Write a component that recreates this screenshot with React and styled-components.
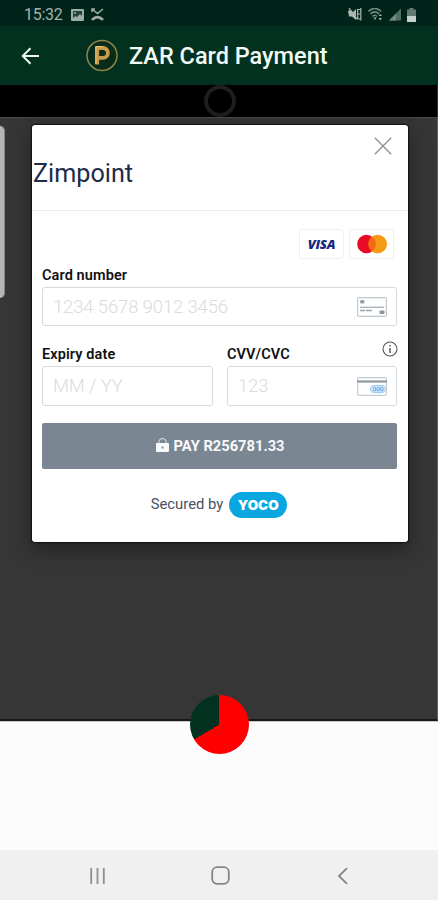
import React from "react";
import styled, { createGlobalStyle } from "styled-components";

const GlobalStyle = createGlobalStyle`
    *{
        box-sizing: border-box;
    }
    body{
        margin: 0;
        font-family: Roboto, "Liberation Sans", sans-serif;
        background-color: #fcfcfc;
    }
    svg{
        display: block;
        flex: none;
    }
`
const Screen = styled.div`
    width: 438px;
    height: 900px;
    display: flex;
    flex-direction: column;
    overflow: hidden;
`
const StatusBar = styled.div`
    display: flex;
    flex: none;
    align-items: center;
    justify-content: space-between;
    height: 26px;
    padding: 3px 22px 0 24px;
    background-color: #01241a;
    color: #a3b3aa;
    font-size: 16px;
    line-height: 24px;
`
const StatusGroup = styled.div`
    display: flex;
    align-items: center;
    gap: ${props => props.$gap}px;
`
const Time = styled.span`
    width: 40px;
    letter-spacing: -0.3px;
`
const AppBar = styled.header`
    display: flex;
    flex: none;
    align-items: center;
    height: 59px;
    padding-left: 21px;
    background-color: #023120;
`
const Logo = styled.div`
    display: flex;
    margin: 0 11px 0 47px;
`
const Title = styled.h1`
    margin: 0;
    color: #f1faf4;
    font-size: 23.5px;
    font-weight: 500;
    line-height: 30px;
    white-space: nowrap;
`
const LoadingStrip = styled.div`
    display: flex;
    flex: none;
    justify-content: center;
    height: 32px;
    padding-left: 2px;
    background-color: #000;
    border-right: 1px solid #323232;
`
const Overlay = styled.main`
    position: relative;
    flex: none;
    height: 604px;
    padding: 7px 29px 0 32px;
    background-color: #363636;
    border-top: 1px solid #4a4a4a;
    border-right: 1px solid #626262;
    border-bottom: 2px solid #181818;
`
const SideHandle = styled.div`
    position: absolute;
    left: 0;
    top: 8px;
    width: 5px;
    height: 172px;
    background-color: #b5b5b5;
    border-right: 1px solid #858585;
    border-radius: 0 5px 5px 0;
`
const Modal = styled.section`
    width: 376px;
    height: 417px;
    background-color: #fff;
    border-radius: 3px;
    box-shadow: 0 0 1px 1px #111, 0 6px 22px rgba(0, 0, 0, 0.42);
`
const ModalHeader = styled.div`
    display: flex;
    justify-content: space-between;
    height: 86px;
    padding: 12px 16px 0 1px;
    border-bottom: 1px solid #ebebed;
`
const StoreName = styled.h2`
    margin: 19px 0 0;
    color: #202b48;
    font-size: 25.2px;
    font-weight: 400;
    line-height: 35px;
`
const Form = styled.div`
    display: flex;
    flex-direction: column;
    padding: 18px 11px 0 10px;
`
const Brands = styled.div`
    display: flex;
    justify-content: flex-end;
    gap: 5px;
    padding-right: 3px;
`
const Brand = styled.div`
    display: flex;
    align-items: center;
    justify-content: center;
    width: 45px;
    height: 30px;
    border: 1px solid #efeff3;
    border-radius: 3px;
`
const Visa = styled.span`
    color: #17267f;
    font-family: "Open Sans", sans-serif;
    font-size: 13px;
    font-style: italic;
    font-weight: 800;
    line-height: 16px;
    letter-spacing: -0.3px;
`
const Row = styled.div`
    display: grid;
    grid-template-columns: 171px 170px;
    column-gap: 14px;
    margin-top: 17px;
`
const Group = styled.div`
    display: flex;
    flex-direction: column;
`
const Label = styled.div`
    display: flex;
    justify-content: space-between;
    height: 20px;
    margin-top: ${props => props.$top || 0}px;
    color: #111;
    font-size: 14.5px;
    font-weight: 600;
    line-height: 23px;
    letter-spacing: 0.1px;
`
const InfoIcon = styled.svg`
    margin-top: -2px;
    margin-right: -1px;
`
const Field = styled.div`
    display: flex;
    align-items: center;
    justify-content: space-between;
    height: ${props => props.$height}px;
    margin-top: 3px;
    padding: 0 9px 0 10px;
    border: 1px solid #d7dadd;
    border-radius: 3px;
    color: #dadbdc;
    font-size: 18.5px;
    font-weight: 300;
    letter-spacing: -0.15px;
`
const PayButton = styled.button`
    display: flex;
    align-items: center;
    justify-content: center;
    gap: 4px;
    height: 46px;
    margin-top: 17px;
    padding: 0 0 0 2px;
    border: 0;
    border-radius: 2px;
    background-color: #7a8793;
    color: #f7f9fb;
    font-family: inherit;
    font-size: 14.7px;
    font-weight: 700;
`
const Secured = styled.div`
    display: flex;
    align-items: center;
    justify-content: center;
    gap: 6px;
    margin-top: 22px;
    padding-right: 1px;
    color: #4a5065;
    font-size: 14.8px;
    line-height: 27px;
`
const Yoco = styled.span`
    width: 58px;
    height: 26px;
    border-radius: 13px;
    background-color: #09a6df;
    color: #fff;
    font-family: Inter, sans-serif;
    font-size: 13.5px;
    font-weight: 900;
    line-height: 26px;
    text-align: center;
`
const PageBottom = styled.div`
    display: flex;
    flex: none;
    justify-content: center;
    height: 129px;
    background-color: #fcfcfc;
    border-top: 1px solid #c8c8c8;
`
const Spinner = styled.div`
    position: relative;
    top: -27px;
    width: 59px;
    height: 59px;
    border-radius: 50%;
    background: conic-gradient(#fe0000 0 66.4%, #023120 66.6% 100%);
`
const NavBar = styled.nav`
    display: flex;
    flex: none;
    align-items: center;
    justify-content: space-between;
    height: 50px;
    padding: 1px 89px 0 88px;
    background-color: #f0f0f0;
`
const HomeIcon = styled.svg`
    margin-right: 3px;
`

class StatusIcons extends React.Component{
    render(){
        return (
            <StatusGroup $gap={6}>
                <svg width="14" height="13" viewBox="0 0 14 13">
                    <path d="M0 3l2-1 3 2 3-3v11L4 8.500H1z" fill="#a9b9b0"/>
                    <path d="M1 0l8 11M9.700 1v10.500M12.800 0v12.500M9 1.500h4M9 6h3M9 11h4" stroke="#a9b9b0" strokeWidth="1.200" fill="none"/>
                </svg>
                <svg width="15" height="13" viewBox="0 0 15 13">
                    <path d="M.5 3.500C4-.5 9.500-.5 13 3.500M2.500 6C5 3.200 8.500 3.200 11 6M4.500 8.500c1.500-1.700 3-1.700 4.500 0" fill="none" stroke="#718b7f" strokeWidth="1.600"/>
                    <path d="M5.500 9.500h3L7 12zM10.500 8l1.700-2L14 8zM10.500 10l1.700 2.500L14 10z" fill="#a3b3aa"/>
                </svg>
                <svg width="12" height="13" viewBox="0 0 12 13">
                    <path d="M0 12.500L12 .5v12z" fill="#526f61"/>
                    <path d="M0 12.500l7-7v7z" fill="#718b7f"/>
                </svg>
                <svg width="9" height="14" viewBox="0 0 9 14">
                    <path d="M2.500 0h4v1.500H9V14H0V1.500h2.500z" fill="#63796e"/>
                    <path d="M0 8h9v6H0z" fill="#c4d0c9"/>
                </svg>
            </StatusGroup>
        )
    }
}

class PaymentModal extends React.Component{
    render(){
        return (
            <Modal>
                <ModalHeader>
                    <StoreName>Zimpoint</StoreName>
                    <svg width="18" height="18" viewBox="0 0 18 18">
                        <path d="M.8.8l16.400 16.400M17.200.8L.8 17.200" stroke="#929292" strokeWidth="1.400"/>
                    </svg>
                </ModalHeader>
                <Form>
                    <Brands>
                        <Brand><Visa>VISA</Visa></Brand>
                        <Brand>
                            <svg width="30" height="20" viewBox="0 0 30 20">
                                <circle cx="9.500" cy="10" r="9.300" fill="#e90a25"/>
                                <circle cx="20.700" cy="10" r="9.300" fill="#f49a17"/>
                                <path d="M15.100 2.600a9.300 9.300 0 0 1 0 14.800a9.300 9.300 0 0 1 0-14.800" fill="#f46a12"/>
                            </svg>
                        </Brand>
                    </Brands>
                    <Group>
                        <Label $top={5}>Card number</Label>
                        <Field $height={39}>
                            <span>1234 5678 9012 3456</span>
                            <svg width="30" height="20" viewBox="0 0 30 20">
                                <rect x=".6" y=".6" width="28.800" height="18.800" rx="1.500" fill="#fdfefe" stroke="#c0c8cd" strokeWidth="1.200"/>
                                <path d="M3 10.300h24" stroke="#a7afb4" strokeWidth="1.300"/>
                                <rect x="3" y="3" width="4.500" height="3.500" rx="1.500" fill="#929da4"/>
                                <path d="M3 13.500h5M9 13.500h6" stroke="#9ba5ab" strokeWidth="1.300"/>
                                <rect x="22.500" y="13.500" width="5" height="3.500" rx="1" fill="#8d989f"/>
                            </svg>
                        </Field>
                    </Group>
                    <Row>
                        <Group>
                            <Label>Expiry date</Label>
                            <Field $height={40}><span>MM / YY</span></Field>
                        </Group>
                        <Group>
                            <Label>
                                <span>CVV/CVC</span>
                                <InfoIcon width="16" height="16" viewBox="0 0 16 16">
                                    <circle cx="8" cy="8" r="7" fill="none" stroke="#555" strokeWidth="1.100"/>
                                    <path d="M8 7v5M8 4v1.500" stroke="#444" strokeWidth="1.300"/>
                                </InfoIcon>
                            </Label>
                            <Field $height={40}>
                                <span>123</span>
                                <svg width="30" height="19" viewBox="0 0 30 19">
                                    <rect x=".6" y=".6" width="28.800" height="17.800" rx="1.500" fill="#fdfefe" stroke="#c6cdd2" strokeWidth="1.200"/>
                                    <path d="M0 4.500h30" stroke="#8d989f" strokeWidth="2.200"/>
                                    <rect x="13.500" y="8.500" width="15" height="7" rx="3.500" fill="#e2f0fd" stroke="#9dcaf2"/>
                                    <g fill="none" stroke="#69aceb" strokeWidth="1.100">
                                        <ellipse cx="17.500" cy="12" rx="1.300" ry="2"/>
                                        <ellipse cx="21.200" cy="12" rx="1.300" ry="2"/>
                                        <ellipse cx="24.900" cy="12" rx="1.300" ry="2"/>
                                    </g>
                                </svg>
                            </Field>
                        </Group>
                    </Row>
                    <PayButton>
                        <svg width="13" height="17" viewBox="0 0 13 17">
                            <path d="M3 6V4a3.500 3.500 0 0 1 7 0V6" fill="none" stroke="#c5ccd1" strokeWidth="1.300"/>
                            <path d="M1 5h11q1 0 1 1v7q0 1-1 1H1q-1 0-1-1V6q0-1 1-1z" fill="#f7f9fb"/>
                            <circle cx="6.500" cy="9.500" r="1.200" fill="#9ba5ae"/>
                        </svg>
                        <span>PAY R256781.33</span>
                    </PayButton>
                    <Secured>
                        <span>Secured by</span>
                        <Yoco>YOCO</Yoco>
                    </Secured>
                </Form>
            </Modal>
        )
    }
}

class App extends React.Component{
    render(){
        return (
            <Screen>
                <GlobalStyle/>
                <StatusBar>
                    <StatusGroup $gap={7}>
                        <Time>15:32</Time>
                        <svg width="13" height="12" viewBox="0 0 13 12">
                            <rect width="13" height="12" rx="1" fill="#9caea4"/>
                            <path d="M2 2h9v5L9 5 6 8 4.500 7 2 9z" fill="#214537"/>
                            <circle cx="4" cy="4" r="1" fill="#9caea4"/>
                        </svg>
                        <svg width="13" height="13" viewBox="0 0 13 13">
                            <path d="M1 4V1h3M1.500 1.500l5 4L12 1" fill="none" stroke="#9caea4" strokeWidth="1.600"/>
                            <path d="M0 11Q6.500 4.500 13 11l-2 1.700-2.500-1.700q-2-.8-4 0L2 12.700z" fill="#9caea4"/>
                        </svg>
                    </StatusGroup>
                    <StatusIcons/>
                </StatusBar>
                <AppBar>
                    <svg width="18" height="18" viewBox="0 0 18 18">
                        <path d="M9.500 1.200L1.700 9l7.800 7.800M1.700 9H18" fill="none" stroke="#eef7f1" strokeWidth="2"/>
                    </svg>
                    <Logo>
                        <svg width="32" height="33" viewBox="0 0 32 33">
                            <circle cx="16" cy="16.500" r="15" fill="#082b1a" stroke="#8e8549" strokeWidth="1.500"/>
                            <path d="M11.200 25.500V9h5.800a4.900 4.900 0 0 1 0 9.800h-6" fill="none" stroke="#c99b48" strokeWidth="3.800"/>
                            <path d="M9.800 25V7.600h7.500" fill="none" stroke="#e9ca80" strokeWidth="1"/>
                        </svg>
                    </Logo>
                    <Title>ZAR Card Payment</Title>
                </AppBar>
                <LoadingStrip>
                    <svg width="34" height="32" viewBox="0 0 34 32">
                        <circle cx="17" cy="16" r="14" fill="none" stroke="#1e1e1e" strokeWidth="4"/>
                    </svg>
                </LoadingStrip>
                <Overlay>
                    <SideHandle/>
                    <PaymentModal/>
                </Overlay>
                <PageBottom>
                    <Spinner/>
                </PageBottom>
                <NavBar>
                    <svg width="18" height="18" viewBox="0 0 18 18">
                        <path d="M3.200 1v16M9.500 1v16M15.800 1v16" stroke="#8e8e8e" strokeWidth="1.800"/>
                    </svg>
                    <HomeIcon width="19" height="19" viewBox="0 0 19 19">
                        <rect x="1.200" y="1.200" width="16.600" height="16.600" rx="5" fill="none" stroke="#858585" strokeWidth="1.800"/>
                    </HomeIcon>
                    <svg width="12" height="18" viewBox="0 0 12 18">
                        <path d="M10 1.200L2 9l8 7.800" fill="none" stroke="#858585" strokeWidth="1.800"/>
                    </svg>
                </NavBar>
            </Screen>
        )
    }
}

export default App;
